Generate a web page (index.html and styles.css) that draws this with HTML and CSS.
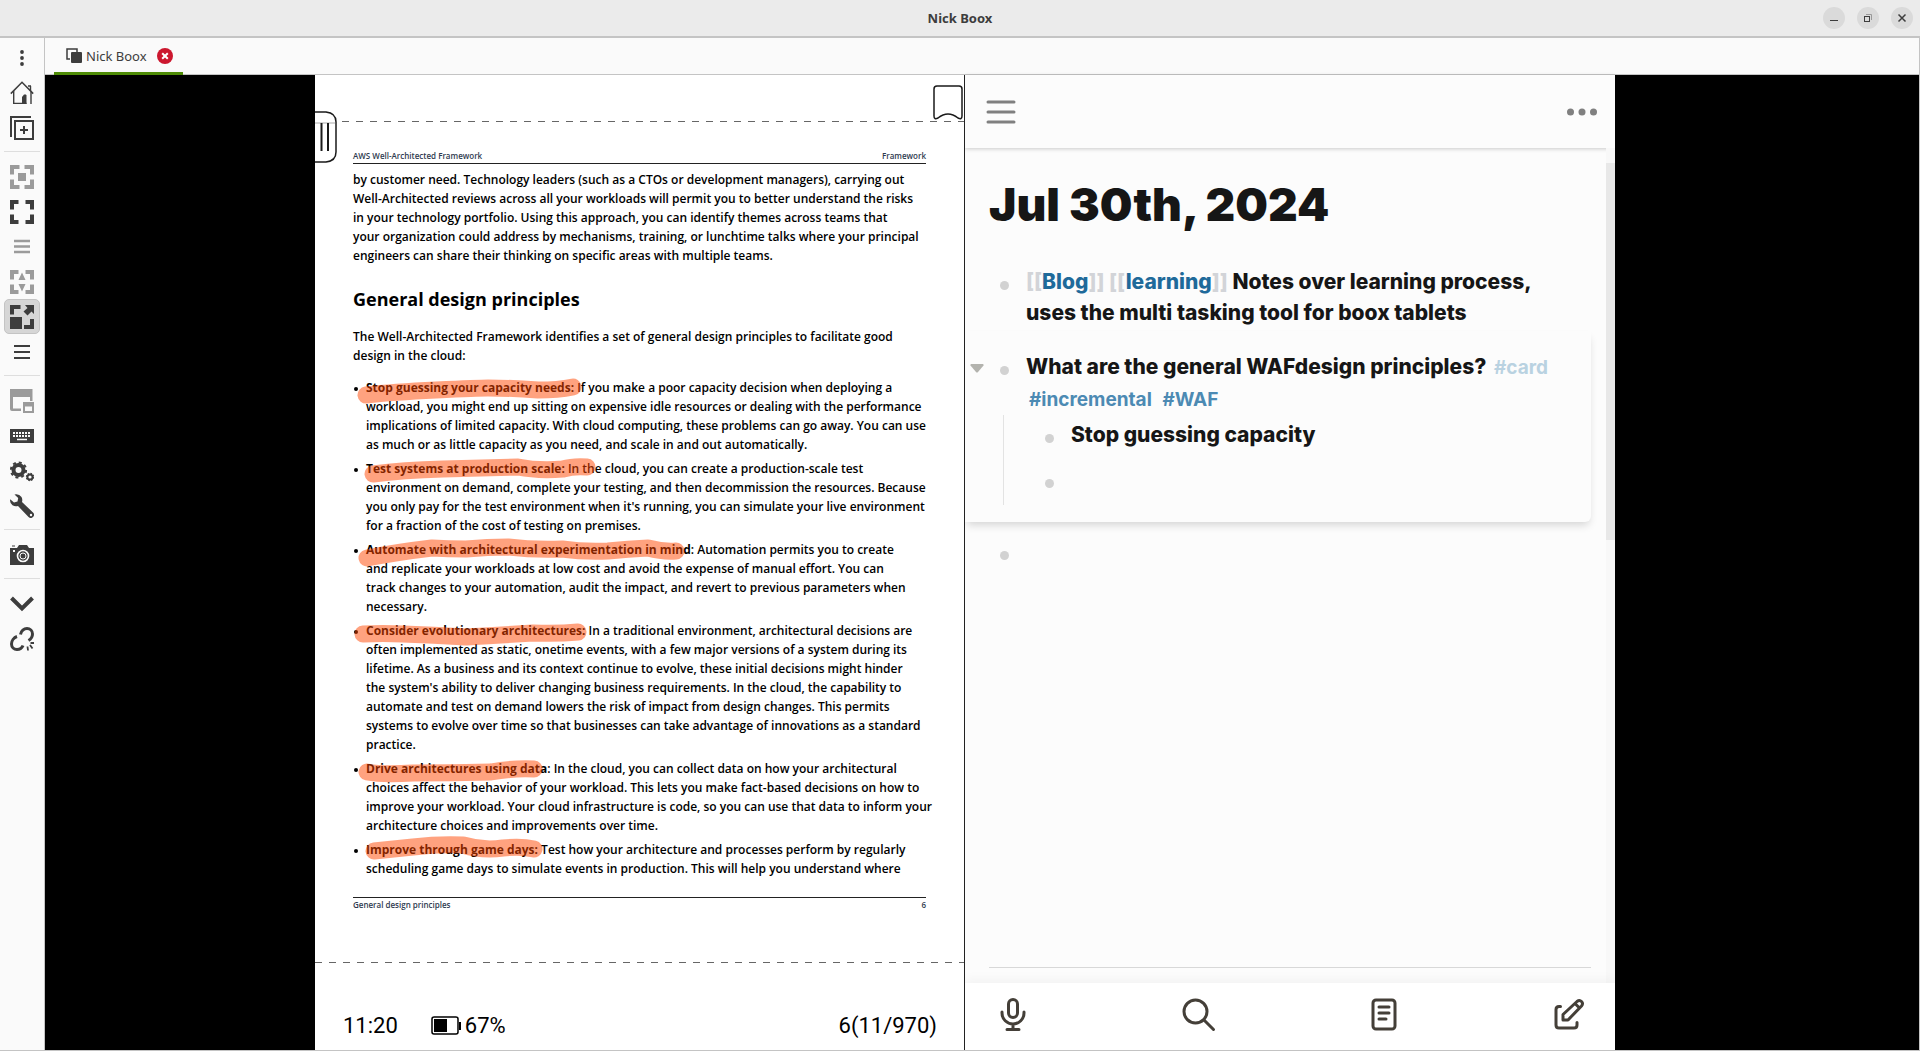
FILE: index.html
```html
<!DOCTYPE html>
<html lang="en">
<head>
<meta charset="utf-8">
<title>Nick Boox</title>
<link rel="stylesheet" href="styles.css">
</head>
<body>
<header class="titlebar">
  <h1 class="titlebar-name">Nick Boox</h1>
  <div class="window-controls">
    <button class="window-button" aria-label="Minimize"><svg width="22" height="22" viewBox="0 0 22 22"><path d="M7 13.5h8" stroke="#3d3d3d"/></svg></button>
    <button class="window-button" aria-label="Restore"><svg width="22" height="22" viewBox="0 0 22 22" fill="none"><path d="M9 7.5h5.500v5.500" stroke="#999"/><rect x="7.500" y="9.500" width="5" height="5" stroke="#3d3d3d"/></svg></button>
    <button class="window-button" aria-label="Close window"><svg width="22" height="22" viewBox="0 0 22 22"><path d="M7.500 7.500l7 7M14.500 7.500l-7 7" stroke="#3d3d3d" stroke-width="1.500"/></svg></button>
  </div>
</header>
<div class="window">
  <nav class="toolbar" aria-label="Tools">
    <button class="tool" aria-label="Menu"><svg width="24" height="24"><g fill="#3d3d3d"><circle cx="12" cy="6" r="1.900"/><circle cx="12" cy="12" r="1.900"/><circle cx="12" cy="18" r="1.900"/></g></svg></button>
    <button class="tool" aria-label="Home"><svg width="24" height="24" fill="none" stroke="#3d3d3d"><path d="M.8 12.600L12 1.300l11.200 11.300" stroke-width="1.500"/><path d="M3.700 10v12.400h12.800M21 10.500v12.400M20.500 5v5M18 5h3" stroke-width="1.400"/><path d="M12 23v-7l2-2.500h2l.5 1V23z" fill="#3d3d3d" stroke="none"/></svg></button>
    <button class="tool" aria-label="New connection"><svg width="24" height="24" fill="none" stroke="#3d3d3d"><path d="M1 21V1h20" stroke-width="2"/><rect x="5" y="5" width="18" height="18" stroke-width="2"/><path d="M14 10v8M10 14h8" stroke-width="2"/></svg></button>
    <hr class="tool-divider">
    <button class="tool tool-off" aria-label="Fit window"><svg width="24" height="24"><path d="M2 9.500V2h7.500M14.500 2H22v7.500M22 14.500V22h-7.500M9.500 22H2v-7.500" fill="none" stroke="currentColor" stroke-width="4"/><path d="M8 8h8v8H8z" fill="currentColor"/></svg></button>
    <button class="tool" aria-label="Full screen"><svg width="24" height="24"><path d="M2 9.500V2h6.500M15.500 2H22v7.500M22 14.500V22h-6.500M8.500 22H2v-7.500" fill="none" stroke="currentColor" stroke-width="4"/></svg></button>
    <button class="tool tool-off" aria-label="Multi monitor"><svg width="24" height="24"><path d="M4 6h16M4 11.500h16M4 17h16" stroke="currentColor" stroke-width="2.500"/></svg></button>
    <button class="tool tool-off" aria-label="Dynamic resolution"><svg width="24" height="24"><path d="M2 9.500V2h6.500M15.500 2H22v7.500M22 14.500V22h-6.500M8.500 22H2v-7.500" fill="none" stroke="currentColor" stroke-width="4"/><path d="M12 2.500l3.500 7.500h-7zM12 21.500L8.500 14h7z" fill="currentColor"/></svg></button>
    <button class="tool tool-on" aria-label="Scaled mode" aria-pressed="true"><svg width="24" height="24"><path d="M2 9.500V2h8.500M22 14v8h-8" fill="none" stroke="currentColor" stroke-width="4"/><path d="M0 12h12v12H0zM15 0h9v9l-2.500-2.500-4 4-4-4 4-3.500z" fill="currentColor"/></svg></button>
    <button class="tool" aria-label="View options"><svg width="24" height="24"><path d="M4 6h16M4 12h16M4 18h16" stroke="currentColor" stroke-width="2"/></svg></button>
    <hr class="tool-divider">
    <button class="tool tool-off" aria-label="Switch page"><svg width="24" height="24"><path d="M0 0h22.500v12H20V8H3v11.500h8V22H2Q0 22 0 20z" fill="currentColor"/><path d="M13 13h11v11H13zM15 17.500V22h7v-4.500z" fill="currentColor" fill-rule="evenodd"/></svg></button>
    <button class="tool" aria-label="Keyboard"><svg width="24" height="24"><path d="M0 5h24v14H0z" fill="currentColor"/><path d="M3 9h18M3 12h18" stroke="#fafafa" stroke-width="2" stroke-dasharray="2 1"/><path d="M7 15.500h10" stroke="#fafafa" stroke-width="1.500"/></svg></button>
    <button class="tool" aria-label="Preferences"><svg width="24" height="24" fill="none" stroke="currentColor"><circle cx="8.500" cy="11" r="5" stroke-width="4"/><circle cx="8.500" cy="11" r="7.600" stroke-width="2" stroke-dasharray="3 2.970"/><circle cx="20" cy="18" r="2.600" stroke-width="2"/><circle cx="20" cy="18" r="3.600" stroke-width="1.200" stroke-dasharray="1.600 1.230"/></svg></button>
    <button class="tool" aria-label="Tools"><svg width="24" height="24"><path d="M4.500.5Q9-.5 11.500 3q1.300 2.500.5 5l11 10.500a3 3 0 1 1-4.500 4.500L8 12Q5 13 2.500 11.200Q-.5 9 .2 5.300L4 8.500l3.500-1L8.200 4z" fill="currentColor"/><circle cx="21" cy="21" r="1.200" fill="#fafafa"/></svg></button>
    <hr class="tool-divider">
    <button class="tool" aria-label="Screenshot"><svg width="24" height="24"><path d="M0 5h7l2-3h8l2 3h5v17H0z" fill="currentColor"/><path d="M2 3h3" stroke="currentColor"/><circle cx="13" cy="13" r="5.500" fill="none" stroke="#fafafa" stroke-width="1.600"/><circle cx="13" cy="13" r="3" fill="none" stroke="#fafafa"/><path d="M3 7h2v2H3z" fill="#fafafa"/></svg></button>
    <hr class="tool-divider">
    <button class="tool" aria-label="Minimize session"><svg width="24" height="24"><path d="M1.500 6L12 16.500 22.500 6" fill="none" stroke="currentColor" stroke-width="4"/></svg></button>
    <button class="tool" aria-label="Disconnect"><svg width="24" height="24" fill="none" stroke="currentColor" stroke-width="3"><path d="M10.500 7.500C11 4 14 1.500 17 1.500a5.500 5.500 0 0 1 5.500 5.500c0 3-1.500 5-4 6.500M7 9.500C4 10.500 1.500 13.500 1.500 17A5.500 5.500 0 0 0 7 22.500c2.500 0 5-1.500 6-4"/><path d="M17.500 19.500l.5 4M20 18l2.500 3.500M20.500 16h3.500" stroke-width="1.800"/></svg></button>
  </nav>
  <main class="session">
    <div class="tabs" role="tablist">
      <div class="tab" role="tab" aria-selected="true">
        <svg width="16" height="16"><path d="M4 11H1V1h10v3" fill="none" stroke="#3d3d3d" stroke-width="1.500"/><rect x="5" y="4" width="11" height="11" rx="1" fill="#3d3d3d"/></svg>
        <span class="tab-name">Nick Boox</span>
        <button class="tab-close" aria-label="Close tab"><svg width="16" height="16"><circle cx="8" cy="8" r="8" fill="#cc172e"/><path d="M5.200 5.200l5.600 5.600M10.800 5.200l-5.600 5.600" stroke="#fff" stroke-width="2"/></svg></button>
      </div>
    </div>
    <div class="stage">
      <section class="reader">
        <button class="side-handle" aria-label="Side bar"><svg width="22" height="52" fill="none" stroke="#1a1a1a"><path d="M0 1h11q10 1 10 10v30q0 9-10 10H0" fill="#fff" stroke-width="1.500"/><path d="M0 12h20" stroke="#aaa"/><path d="M6.500 12v28M13 12v28" stroke-width="2"/></svg></button>
        <button class="bookmark" aria-label="Bookmark"><svg width="30" height="36"><path d="M4 1h22q3 0 3 3v27q0 4-4 2-10-8-20 0-4 2-4-2V4q0-3 3-3z" fill="#fff" stroke="#1a1a1a" stroke-width="1.500"/></svg></button>
        <div class="page-edge page-edge-top"></div>
        <article class="page">
          <div class="running-head"><span>AWS Well-Architected Framework</span><span>Framework</span></div>
          <p class="text">by customer need. Technology leaders (such as a CTOs or development managers), carrying out<br>Well-Architected reviews across all your workloads will permit you to better understand the risks<br>in your technology portfolio. Using this approach, you can identify themes across teams that<br>your organization could address by mechanisms, training, or lunchtime talks where your principal<br>engineers can share their thinking on specific areas with multiple teams.</p>
          <h2 class="page-title">General design principles</h2>
          <p class="text">The Well-Architected Framework identifies a set of general design principles to facilitate good<br>design in the cloud:</p>
          <ul class="principles">
            <li><strong>Stop guessing your capacity needs:</strong> If you make a poor capacity decision when deploying a<br>workload, you might end up sitting on expensive idle resources or dealing with the performance<br>implications of limited capacity. With cloud computing, these problems can go away. You can use<br>as much or as little capacity as you need, and scale in and out automatically.
              <svg class="marker" viewBox="0 0 340 30"><path d="M13 17Q40 14 83 12T135 10Q160 10 185 12 205 12 220 9"/></svg></li>
            <li><strong>Test systems at production scale:</strong> In the cloud, you can create a production-scale test<br>environment on demand, complete your testing, and then decommission the resources. Because<br>you only pay for the test environment when it's running, you can simulate your live environment<br>for a fraction of the cost of testing on premises.
              <svg class="marker" viewBox="0 0 340 30"><path d="M20 15Q50 11 90 10 130 9 165 8 185 12 210 10 220 7 234 8"/></svg></li>
            <li><strong>Automate with architectural experimentation in mind</strong>: Automation permits you to create<br>and replicate your workloads at low cost and avoid the expense of manual effort. You can<br>track changes to your automation, audit the impact, and revert to previous parameters when<br>necessary.
              <svg class="marker" viewBox="0 0 340 30"><path d="M14 18Q45 12 79 8 95 9 113 9 135 7 155 7 180 10 209 9 230 12 255 11 275 9 295 8 310 12 323 11"/></svg></li>
            <li><strong>Consider evolutionary architectures:</strong> In a traditional environment, architectural decisions are<br>often implemented as static, onetime events, with a few major versions of a system during its<br>lifetime. As a business and its context continue to evolve, these initial decisions might hinder<br>the system's ability to deliver changing business requirements. In the cloud, the capability to<br>automate and test on demand lowers the risk of impact from design changes. This permits<br>systems to evolve over time so that businesses can take advantage of innovations as a standard<br>practice.
              <svg class="marker" viewBox="0 0 340 30"><path d="M10 13Q30 12 50 13 80 14 113 16 150 14 180 12 205 13 225 11"/></svg></li>
            <li><strong>Drive architectures using data</strong>: In the cloud, you can collect data on how your architectural<br>choices affect the behavior of your workload. This lets you make fact-based decisions on how to<br>improve your workload. Your cloud infrastructure is code, so you can use that data to inform your<br>architecture choices and improvements over time.
              <svg class="marker" viewBox="0 0 340 30"><path d="M14 13Q30 16 60 14 100 14 138 13 160 9 181 10"/></svg></li>
            <li><strong>Improve through game days:</strong> Test how your architecture and processes perform by regularly<br>scheduling game days to simulate events in production. This will help you understand where
              <svg class="marker" viewBox="0 0 340 30"><path d="M21 11Q40 9 60 7 85 4 110 5 130 11 150 8 168 6 181 9"/></svg></li>
          </ul>
          <div class="running-foot"><span>General design principles</span><span>6</span></div>
        </article>
        <div class="page-edge page-edge-bottom"></div>
        <footer class="status">
          <span class="clock">11:20</span>
          <svg width="30" height="20" fill="none" stroke="#000"><rect x="1" y="1" width="26" height="17" rx="2" stroke-width="1.500"/><path d="M29 6v8" stroke-width="2"/><rect x="3" y="3" width="13" height="13" fill="#000" stroke="none"/></svg>
          <span class="charge">67%</span>
          <span class="position">6(11/970)</span>
        </footer>
      </section>
      <section class="notes">
        <header class="notes-bar">
          <button class="plain" aria-label="Open menu"><svg width="30" height="26"><path d="M2 3h26M2 13h26M2 23h26" stroke="#808080" stroke-width="3" stroke-linecap="round"/></svg></button>
          <button class="plain" aria-label="More"><svg width="30" height="26" fill="#808080"><circle cx="3.500" cy="13" r="3.500"/><circle cx="15" cy="13" r="3.500"/><circle cx="26.500" cy="13" r="3.500"/></svg></button>
        </header>
        <div class="notes-scroll">
          <div class="journal">
            <h2 class="journal-title">Jul 30th, 2024</h2>
            <div class="block">
              <span class="dot"></span>
              <p class="block-text"><span class="bracket">[[</span><a href="#blog">Blog</a><span class="bracket">]]</span> <span class="bracket">[[</span><a href="#learning">learning</a><span class="bracket">]]</span> Notes over learning process,<br>uses the multi tasking tool for boox tablets</p>
            </div>
            <div class="card">
              <div class="block">
                <button class="plain fold" aria-label="Collapse"><svg width="14" height="9"><path d="M1 0h12q1 .5.500 1.500L8 8q-1 1-2 0L.5 1.500Q0 .5 1 0z" fill="#b3b3ae"/></svg></button>
                <span class="dot"></span>
                <p class="block-text">What are the general WAFdesign principles? <a class="tag tag-faint" href="#card">#card</a><br><a class="tag" href="#incremental">#incremental</a> <a class="tag" href="#waf">#WAF</a></p>
              </div>
              <div class="children">
                <div class="block"><span class="dot"></span><p class="block-text">Stop guessing capacity</p></div>
                <div class="block"><span class="dot"></span><p class="block-text"></p></div>
              </div>
            </div>
            <div class="block block-empty"><span class="dot"></span></div>
            <hr class="journal-end">
          </div>
          <div class="scrollbar"><div class="scrollbar-thumb"></div></div>
        </div>
        <nav class="notes-nav" aria-label="Notes">
          <button class="plain" aria-label="Record"><svg class="nav-icon" viewBox="0 0 40 40"><rect x="15.500" y="5.500" width="9" height="18" rx="4.500"/><path d="M9 18v1a11 11 0 0 0 22 0v-1M20 30v5M14 35.500h12"/></svg></button>
          <button class="plain" aria-label="Search"><svg class="nav-icon" viewBox="0 0 40 40"><circle cx="17.500" cy="17.500" r="11.500"/><path d="M26 26l9.500 9.500"/></svg></button>
          <button class="plain" aria-label="Journals"><svg class="nav-icon" viewBox="0 0 40 40"><rect x="9" y="6" width="22" height="29" rx="3"/><path d="M15 13h10M15 19h10M15 25h7"/></svg></button>
          <button class="plain" aria-label="Edit"><svg class="nav-icon" viewBox="0 0 40 40"><path d="M11.500 12.500H10q-3 0-3 3V31q0 3 3 3h15q3 0 3-3v-2.500M14 26v-5.500L28 7.500q2.500-2 4.500 0t0 4.500L19 26zM26 9.500l4.500 4.500"/></svg></button>
        </nav>
      </section>
    </div>
  </main>
</div>
</body>
</html>
```
FILE: styles.css
```css
* { box-sizing: border-box; }
body {
  margin: 0;
  min-height: 100vh;
  display: flex;
  flex-direction: column;
  background: #fafafa;
  color: #3d3d3d;
  font-family: "Noto Sans", sans-serif;
}
svg { display: block; }
h1, h2, p, ul { margin: 0; padding: 0; }
button { padding: 0; border: 0; background: none; color: inherit; font: inherit; }

/* Window frame */
.titlebar {
  display: grid;
  grid-template-columns: 1fr auto 1fr;
  align-items: center;
  height: 38px;
  background: #ebebeb;
  border-bottom: 2px solid #c4c4c4;
}
.titlebar-name { grid-column: 2; font-size: 13px; line-height: 20px; font-weight: 700; }
.window-controls { display: flex; justify-content: flex-end; gap: 12px; padding-right: 7px; }
.window-button { border-radius: 50%; background: #dadada; }
.window {
  flex: 1;
  display: flex;
  border-right: 1px solid #c4c4c4;
  border-bottom: 1px solid #c4c4c4;
}

/* Left tool strip */
.toolbar {
  width: 45px;
  padding: 2px 4px;
  border-right: 1px solid #c4c4c4;
  display: flex;
  flex-direction: column;
  flex-shrink: 0;
}
.tool {
  height: 35px;
  display: flex;
  align-items: center;
  justify-content: center;
  border-radius: 5px;
}
.tool-off { color: #9b9b9b; }
.tool-on { background: #d6d6d6; border: 1px solid #c4c4c4; }
.tool-divider { width: 100%; margin: 6px 0 7px; border: 0; border-top: 1px solid #dedede; }

/* Tabs */
.session { flex: 1; display: flex; flex-direction: column; min-width: 0; }
.tabs { height: 37px; padding-left: 9px; display: flex; border-bottom: 1px solid #c4c4c4; }
.tab {
  height: 37px;
  padding: 2px 10px 0 12px;
  display: flex;
  align-items: center;
  border-bottom: 3px solid #4e8b06;
}
.tab-name { margin: 0 10px 0 4px; font-size: 13px; line-height: 20px; }

/* Remote screen, split in two panes */
.stage {
  flex: 1;
  display: grid;
  grid-template-columns: 270fr 650fr 650fr 304fr;
  background: #000;
}
.reader {
  grid-column: 2;
  position: relative;
  display: flex;
  flex-direction: column;
  background: #fff;
  color: #000;
  border-right: 1px solid #222;
  overflow: hidden;
}
.side-handle { position: absolute; left: 0; top: 36px; }
.bookmark { position: absolute; right: 1px; top: 10px; }
.page-edge {
  height: 1px;
  background: repeating-linear-gradient(90deg, #666 0 7px, transparent 7px 14px);
}
.page-edge-top { margin: 46px 0 27px 27px; }
.page-edge-bottom { margin-top: 50px; }
.page {
  margin: 0 38px;
  font-family: "Open Sans", "Noto Sans", sans-serif;
  font-size: 12px;
  line-height: 19px;
  font-weight: 600;
  white-space: nowrap;
}
.running-head, .running-foot {
  display: flex;
  justify-content: space-between;
  color: #2f3b4f;
  font-size: 8px;
  line-height: 14px;
  font-weight: 600;
}
.running-head { border-bottom: 1px solid #222; margin-bottom: 6px; }
.running-foot { border-top: 1px solid #222; margin-top: 19px; }
.page-title { margin: 22px 0 16px; font-size: 18px; line-height: 24px; font-weight: 700; }
.principles { margin-top: 13px; list-style: none; }
.principles li { position: relative; padding-left: 13px; }
.principles li + li { margin-top: 5px; }
.principles li::before {
  content: "";
  position: absolute;
  left: 1px;
  top: 9px;
  width: 4px;
  height: 4px;
  border-radius: 50%;
  background: #000;
}
.principles strong { font-weight: 700; }
.marker {
  position: absolute;
  left: 0;
  top: 0;
  width: 340px;
  height: 30px;
  overflow: visible;
  fill: none;
  stroke: #ff4500;
  stroke-opacity: .5;
  stroke-width: 17px;
  stroke-linecap: round;
  stroke-linejoin: round;
}
.status {
  margin-top: auto;
  padding: 0 27px 9px 28px;
  display: flex;
  align-items: center;
  font-family: Roboto, sans-serif;
  font-size: 22px;
  line-height: 30px;
}
.clock { margin-right: 33px; }
.charge { margin-left: 4px; }
.position { margin-left: auto; }

/* Notes app */
.notes {
  grid-column: 3;
  display: flex;
  flex-direction: column;
  background: #fcfcfc;
  color: #161616;
  font-family: Inter, sans-serif;
  font-size: 21px;
  line-height: 31px;
  font-weight: 800;
}
.notes-bar {
  height: 73px;
  padding: 0 18px 0 21px;
  display: flex;
  align-items: center;
  justify-content: space-between;
  box-shadow: 0 1px 4px rgba(0, 0, 0, .2);
}
.notes-scroll { flex: 1; display: flex; }
.journal { flex: 1; display: flex; flex-direction: column; padding: 28px 15px 15px 24px; }
.journal-title { margin-bottom: 34px; font-size: 46px; line-height: 56px; font-weight: 900; }
.block { position: relative; display: flex; padding-left: 11px; gap: 17px; }
.dot { flex: none; width: 9px; height: 9px; margin-top: 15px; border-radius: 50%; background: #d2d2d2; }
.block-text { white-space: nowrap; }
.block a { color: #1f6a9a; text-decoration: none; }
.bracket { color: #d2d4d8; }
.card {
  margin: 3px 0 0 -24px;
  padding: 20px 0 17px 24px;
  border-radius: 0 0 6px 0;
  box-shadow: 0 5px 8px -2px rgba(0, 0, 0, .16);
}
.block .fold { position: absolute; left: -19px; top: 13px; }
.block .tag { margin: 0 3px; color: #4c8ab3; font-size: 19px; font-weight: 700; }
.block .tag-faint { color: #b9d2e1; }
.children { margin: 0 0 0 14px; padding-left: 30px; border-left: 1px solid #e3e3e3; }
.children .block { height: 45px; padding-top: 4px; }
.block-empty { margin-top: 14px; }
.journal-end { width: 100%; margin: auto 0 0; border: 0; border-top: 1px solid #d8d8d8; }
.scrollbar { width: 9px; padding-top: 15px; background: #f8f8f8; }
.scrollbar-thumb { height: 46%; background: #e8e8e8; }
.notes-nav {
  height: 67px;
  padding: 0 26px 5px 28px;
  display: flex;
  align-items: center;
  justify-content: space-between;
  background: #fff;
  box-shadow: 0 -4px 10px rgba(0, 0, 0, .04);
}
.nav-icon {
  width: 40px;
  height: 40px;
  fill: none;
  stroke: #443f38;
  stroke-width: 3px;
  stroke-linecap: round;
  stroke-linejoin: round;
}
```
